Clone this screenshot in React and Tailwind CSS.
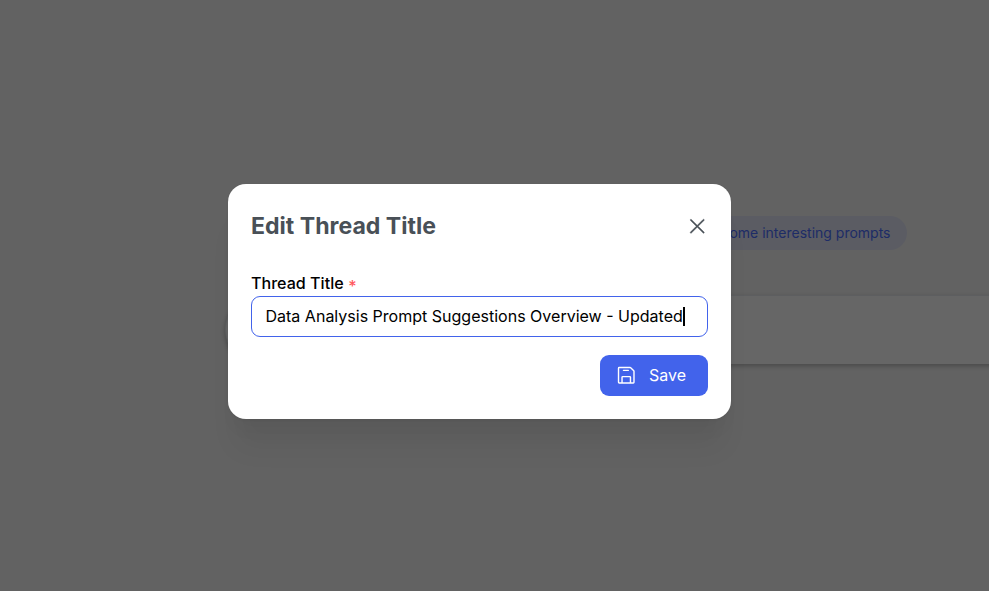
import { PiFloppyDisk, PiX } from "react-icons/pi";

function Workspace() {
  return (
    <main className="flex h-full flex-col overflow-hidden bg-[#f5f5f5] pt-[216px]">
      <div className="flex pl-[650px]">
        <button className="flex h-[34px] w-[257px] shrink-0 items-center justify-end rounded-full bg-[#e3e6f8] pr-[16.5px] pb-[2px] text-[14px] whitespace-nowrap text-[#4c6fff]">
          Suggest some interesting prompts
        </button>
      </div>
      <div className="mt-[45px] ml-[225px] h-[69px] w-[900px] shrink-0 rounded-full border border-b-0 border-[#e9ecef] bg-white shadow-[0_2px_5px_rgba(0,0,0,0.26)]" />
    </main>
  );
}

function EditDialog() {
  return (
    <section
      role="dialog"
      aria-label="Edit Thread Title"
      className="flex h-[235px] w-[503px] flex-col rounded-[18px] bg-white px-[23px] shadow-[0_1px_3px_rgba(0,0,0,0.05),0_36px_28px_-7px_rgba(0,0,0,0.05),0_17px_17px_-7px_rgba(0,0,0,0.04)]"
    >
      <header className="mt-[24px] flex h-[36px] items-center justify-between">
        <h2 className="text-[23.1px] font-bold text-[#495057]">Edit Thread Title</h2>
        <button aria-label="Close" className="text-[#495057]">
          <PiX className="size-[22.5px]" strokeWidth={4} stroke="currentColor" />
        </button>
      </header>
      <label className="mt-[26px] mb-[1px] flex h-[25px] items-center text-[16.1px] leading-[24px] font-medium text-black">
        <span>Thread Title</span>
        <span className="ml-[4.5px] pt-[6px] text-[#ff5a5f]">*</span>
      </label>
      <div className="flex h-[41px] items-center rounded-[9px] border border-[#4263eb] pb-[1px] pl-[13.5px] text-[16.03px] whitespace-nowrap text-black">
        <span className="leading-[24px]">Data Analysis Prompt Suggestions Overview - Updated</span>
        <span className="h-[19px] w-[2px] shrink-0 bg-black" />
      </div>
      <button className="mt-[18px] flex h-[41px] w-[108px] items-center self-end rounded-[9px] bg-[#4263eb] pl-[15px] text-[16px] text-white">
        <PiFloppyDisk className="size-[22.5px]" />
        <span className="ml-[11.5px] pb-[2px]">Save</span>
      </button>
    </section>
  );
}

export default function App() {
  return (
    <div className="relative h-[591px] w-[989px] overflow-hidden font-['Inter',sans-serif]">
      <Workspace />
      <div className="absolute inset-0 flex items-start bg-black/60 pt-[184px] pl-[228px]">
        <EditDialog />
      </div>
    </div>
  );
}
